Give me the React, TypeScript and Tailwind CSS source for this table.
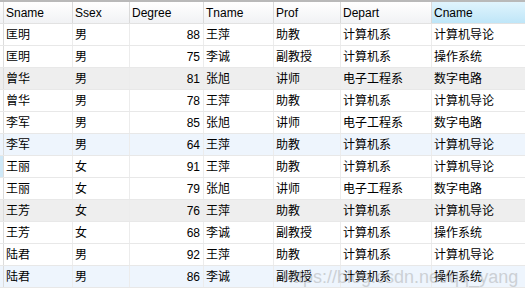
import React from "react";

const cols = ["Sname", "Ssex", "Degree", "Tname", "Prof", "Depart", "Cname"];
const widths = "grid-cols-[4px_69px_57px_74px_70px_67px_91px_93px]";

type Row = [string, string, number, string, string, string, string];

const rows: Row[] = [
  ["匡明", "男", 88, "王萍", "助教", "计算机系", "计算机导论"],
  ["匡明", "男", 75, "李诚", "副教授", "计算机系", "操作系统"],
  ["曾华", "男", 81, "张旭", "讲师", "电子工程系", "数字电路"],
  ["曾华", "男", 78, "王萍", "助教", "计算机系", "计算机导论"],
  ["李军", "男", 85, "张旭", "讲师", "电子工程系", "数字电路"],
  ["李军", "男", 64, "王萍", "助教", "计算机系", "计算机导论"],
  ["王丽", "女", 91, "王萍", "助教", "计算机系", "计算机导论"],
  ["王丽", "女", 79, "张旭", "讲师", "电子工程系", "数字电路"],
  ["王芳", "女", 76, "王萍", "助教", "计算机系", "计算机导论"],
  ["王芳", "女", 68, "李诚", "副教授", "计算机系", "操作系统"],
  ["陆君", "男", 92, "王萍", "助教", "计算机系", "计算机导论"],
  ["陆君", "男", 86, "李诚", "副教授", "计算机系", "操作系统"],
];

function rowBg(i: number) {
  if (i % 3 === 2) return i % 6 === 2 ? "bg-[#eeeeee]" : "bg-[#eef5fd]";
  return "bg-white";
}

export default function App() {
  return (
    <div
      className="relative w-[525px] h-[295px] bg-white text-[12px] text-black overflow-hidden"
      style={{ fontFamily: '"Liberation Sans", "Noto Sans CJK SC", sans-serif' }}
    >
      <div className="h-[2px] bg-[#b9b9b9]" />
      {/* header */}
      <div className={`grid ${widths} h-[22px] border-b border-[#e2e2e2]`}>
        <div className="bg-gradient-to-b from-white to-[#f1f2f4] border-r border-[#dadada]" />
        {cols.map((c, i) => (
          <div
            key={c}
            className={`flex items-center pl-[2px] border-r border-[#dadada] ${
              i === 6
                ? "bg-gradient-to-b from-[#e0f4fd] to-[#bfe6f8] border-r-0"
                : "bg-gradient-to-b from-white to-[#f1f2f4]"
            }`}
          >
            {c}
          </div>
        ))}
      </div>
      {/* body */}
      {rows.map((r, i) => (
        <div key={i} className={`grid ${widths} h-[22px] border-b border-[#e8e8e8] ${rowBg(i)}`}>
          <div className={`border-r border-[#dcdcdc] ${i === 6 ? "bg-[#cfe8f7]" : ""}`} />
          <div className="flex items-center pl-[2px] border-r border-[#ececec]">{r[0]}</div>
          <div className="flex items-center pl-[2px] border-r border-[#ececec]">{r[1]}</div>
          <div className="flex items-center justify-end pr-[3px] border-r border-[#ececec]">{r[2]}</div>
          <div className="flex items-center pl-[2px] border-r border-[#ececec]">{r[3]}</div>
          <div className="flex items-center pl-[2px] border-r border-[#ececec]">{r[4]}</div>
          <div className="flex items-center pl-[2px] border-r border-[#ececec]">{r[5]}</div>
          <div className="flex items-center pl-[2px]">{r[6]}</div>
        </div>
      ))}
      {/* watermark */}
      <div className="absolute left-[283px] top-[264px] text-[18px] text-[#9a9a9a] opacity-40 pointer-events-none whitespace-nowrap">
        https://blog.csdn.net/qq_yang
      </div>
    </div>
  );
}
